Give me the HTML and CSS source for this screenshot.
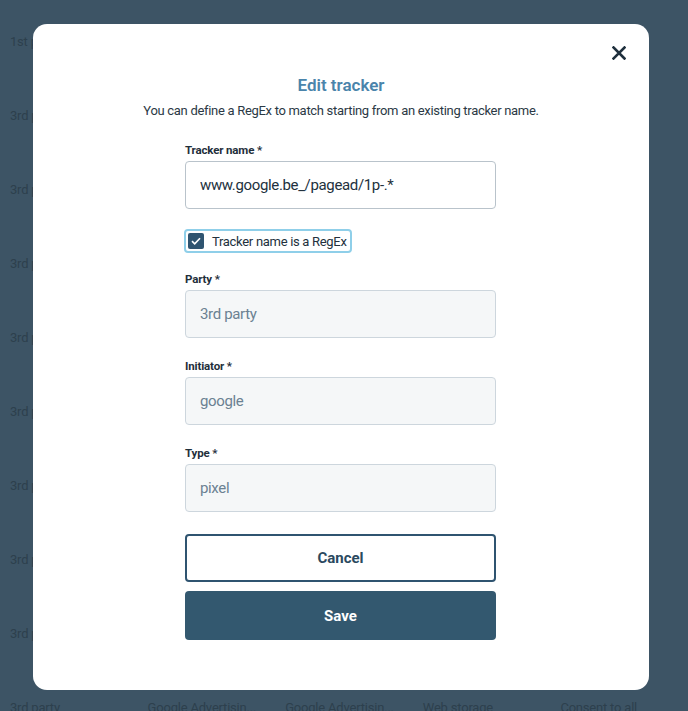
FILE: index.html
```html
<!DOCTYPE html>
<html lang="en">

<head>
    <meta charset="UTF-8">
    <meta name="viewport" content="width=device-width, initial-scale=1.0">
    <title>Edit tracker</title>
    <link rel="stylesheet" href="styles.css">
</head>

<body>
    <div class="tracker-list">
        <div class="row"><span>1st party</span></div>
        <div class="row"><span>3rd party</span></div>
        <div class="row"><span>3rd party</span></div>
        <div class="row"><span>3rd party</span></div>
        <div class="row"><span>3rd party</span></div>
        <div class="row"><span>3rd party</span></div>
        <div class="row"><span>3rd party</span></div>
        <div class="row"><span>3rd party</span></div>
        <div class="row"><span>3rd party</span></div>
        <div class="row">
            <span>3rd party</span>
            <span>Google Advertisin...</span>
            <span>Google Advertisin...</span>
            <span>Web storage</span>
            <span>Consent to all</span>
        </div>
    </div>

    <div class="overlay">
        <div class="modal">
            <button type="button" class="close" aria-label="Close">
                <svg width="14" height="14" viewBox="0 0 14 14">
                    <path d="M1.5 1.5 L12.5 12.5 M12.5 1.5 L1.5 12.5" stroke="#1f303d" stroke-width="2.6" stroke-linecap="square" fill="none"/>
                </svg>
            </button>
            <h2>Edit tracker</h2>
            <p class="intro">You can define a RegEx to match starting from an existing tracker name.</p>

            <form class="tracker-form">
                <div class="input-group">
                    <label for="trackerName">Tracker name *</label>
                    <input type="text" id="trackerName" value="www.google.be_/pagead/1p-.*">
                </div>
                <label class="check">
                    <span class="box">
                        <svg width="10" height="8" viewBox="0 0 10 8">
                            <path d="M1 4.2 L3.7 6.8 L9 1.2" stroke="#fff" stroke-width="1.6" fill="none"/>
                        </svg>
                    </span>
                    Tracker name is a RegEx
                </label>
                <div class="input-group">
                    <label for="party">Party *</label>
                    <input type="text" id="party" value="3rd party" disabled>
                </div>
                <div class="input-group">
                    <label for="initiator">Initiator *</label>
                    <input type="text" id="initiator" value="google" disabled>
                </div>
                <div class="input-group">
                    <label for="type">Type *</label>
                    <input type="text" id="type" value="pixel" disabled>
                </div>
                <button type="button" class="btn btn-cancel">Cancel</button>
                <button type="button" class="btn btn-save">Save</button>
            </form>
        </div>
    </div>
</body>

</html>
```

FILE: styles.css
```css
/* styles.css */
body {
    font-family: Roboto, "Noto Sans", sans-serif;
    margin: 0;
    height: 711px;
    overflow: hidden;
    background-color: #3d5465;
}

.tracker-list {
    padding-top: 4px;
}

.tracker-list .row {
    height: 74px;
    display: flex;
    align-items: center;
    font-size: 13px;
    letter-spacing: -0.2px;
    color: #2d404d;
}

.tracker-list .row span {
    width: 137px;
    padding-left: 10px;
    white-space: nowrap;
}

.overlay {
    position: fixed;
    inset: 0;
    padding: 24px 0 0 33px;
}

.modal {
    position: relative;
    width: 616px;
    height: 666px;
    box-sizing: border-box;
    padding-top: 49px;
    background: #fff;
    border-radius: 14px;
    text-align: center;
}

.close {
    position: absolute;
    top: 22px;
    right: 23px;
    padding: 0;
    border: none;
    background: none;
    line-height: 0;
}

h2 {
    margin: 0;
    font-size: 17px;
    line-height: 24px;
    font-weight: 600;
    color: #4a84ab;
}

.intro {
    margin: 4px 0 0;
    font-size: 13px;
    letter-spacing: -0.3px;
    line-height: 20px;
    color: #2b3945;
}

.tracker-form {
    width: 311px;
    margin: 21px 0 0 152px;
    text-align: left;
}

.input-group {
    margin-bottom: 20px;
}

.input-group label {
    display: block;
    margin-bottom: 3px;
    font-size: 11.5px;
    letter-spacing: -0.15px;
    line-height: 16px;
    font-weight: 700;
    color: #1f2f3b;
}

.input-group input {
    width: 100%;
    height: 48px;
    box-sizing: border-box;
    padding: 0 14px;
    border: 1px solid #b9c3cb;
    border-radius: 4px;
    font-family: inherit;
    font-size: 15px;
    letter-spacing: -0.35px;
    color: #22313d;
    background: #fff;
}

.input-group input:disabled {
    background: #f5f7f8;
    border-color: #cdd6dd;
    color: #6b8192;
}

.check {
    display: inline-flex;
    align-items: center;
    gap: 8px;
    height: 20px;
    margin: 0 0 18px -1px;
    padding: 0 3px 0 2px;
    border: 2px solid #8fcfe9;
    border-radius: 4px;
    font-size: 13px;
    letter-spacing: -0.3px;
    color: #22313d;
}

.check .box {
    width: 16px;
    height: 16px;
    border-radius: 2px;
    background: #2f5470;
    display: flex;
    align-items: center;
    justify-content: center;
}

.btn {
    display: block;
    width: 100%;
    height: 48px;
    border-radius: 4px;
    font-family: inherit;
    font-size: 15px;
    font-weight: 700;
    cursor: pointer;
}

.btn-cancel {
    margin-top: 22px;
    background: #fff;
    border: 2px solid #2f5470;
    color: #2a4960;
}

.btn-save {
    margin-top: 9px;
    height: 49px;
    background: #33586f;
    border: none;
    color: #fff;
}
```
